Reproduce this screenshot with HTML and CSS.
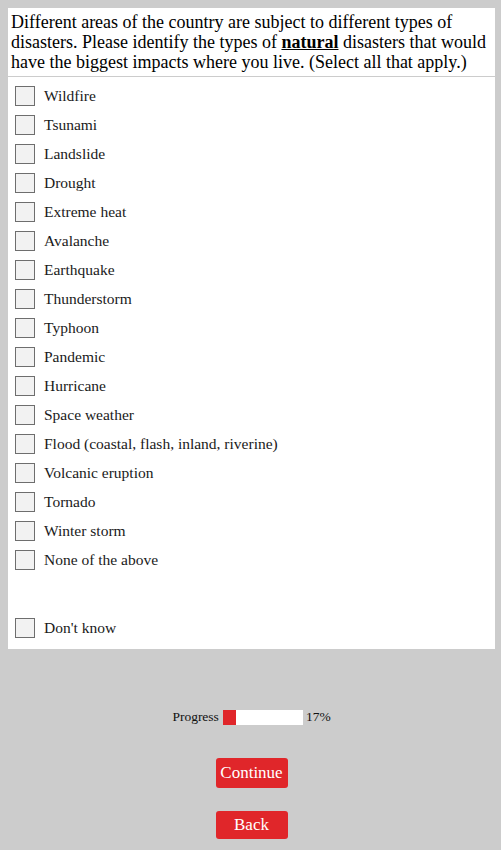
FILE: index.html
```html
<!DOCTYPE html>
<html>
<head>
<meta charset="utf-8">
<link rel="stylesheet" href="styles.css">
</head>
<body>
<div class="panel">
  <div class="question">Different areas of the country are subject to different types of disasters. Please identify the types of <b><u>natural</u></b> disasters that would have the biggest impacts where you live. (Select all that apply.)</div>
  <div class="options">
    <label class="row"><span class="box"></span><span class="lbl">Wildfire</span></label>
    <label class="row"><span class="box"></span><span class="lbl">Tsunami</span></label>
    <label class="row"><span class="box"></span><span class="lbl">Landslide</span></label>
    <label class="row"><span class="box"></span><span class="lbl">Drought</span></label>
    <label class="row"><span class="box"></span><span class="lbl">Extreme heat</span></label>
    <label class="row"><span class="box"></span><span class="lbl">Avalanche</span></label>
    <label class="row"><span class="box"></span><span class="lbl">Earthquake</span></label>
    <label class="row"><span class="box"></span><span class="lbl">Thunderstorm</span></label>
    <label class="row"><span class="box"></span><span class="lbl">Typhoon</span></label>
    <label class="row"><span class="box"></span><span class="lbl">Pandemic</span></label>
    <label class="row"><span class="box"></span><span class="lbl">Hurricane</span></label>
    <label class="row"><span class="box"></span><span class="lbl">Space weather</span></label>
    <label class="row"><span class="box"></span><span class="lbl">Flood (coastal, flash, inland, riverine)</span></label>
    <label class="row"><span class="box"></span><span class="lbl">Volcanic eruption</span></label>
    <label class="row"><span class="box"></span><span class="lbl">Tornado</span></label>
    <label class="row"><span class="box"></span><span class="lbl">Winter storm</span></label>
    <label class="row"><span class="box"></span><span class="lbl">None of the above</span></label>
    <label class="row dk"><span class="box"></span><span class="lbl">Don't know</span></label>
  </div>
</div>
<div class="footer">
  <div class="progress">
    <span class="ptext">Progress</span>
    <span class="bar"><span class="fill" style="width:17%"></span></span>
    <span class="pct">17%</span>
  </div>
  <button class="btn cont">Continue</button>
  <button class="btn back">Back</button>
</div>
</body>
</html>
```
FILE: styles.css
```css
html, body { margin: 0; padding: 0; }
body {
  background: #cccccc;
  padding: 8px 6px 0 8px;
  font-family: "Liberation Serif", "DejaVu Serif", serif;
  color: #111;
}
.panel {
  background: #fff;
  padding-bottom: 7px;
}
.question {
  font-size: 18px;
  line-height: 20px;
  padding: 4px 3px;
  border-bottom: 1px solid #cccccc;
  color: #000;
}
.options {
  padding-top: 4px;
  display: flex;
  flex-direction: column;
}
.row {
  height: 29px;
  display: flex;
  align-items: center;
  padding-left: 7px;
}
.row.dk { margin-top: 39px; }
.box {
  width: 18px;
  height: 18px;
  border: 1px solid #6e6e6e;
  background: #f2f2f2;
  flex: none;
}
.lbl {
  margin-left: 9px;
  font-size: 15.5px;
  color: #1a1a1a;
}
.footer {
  display: flex;
  flex-direction: column;
  align-items: center;
  padding-top: 60px;
}
.progress {
  display: flex;
  align-items: center;
  font-size: 13.5px;
  height: 16px;
}
.bar {
  width: 80px;
  height: 15px;
  background: #fff;
  margin: 0 3px 0 4px;
  display: flex;
}
.fill { background: #e0262a; height: 100%; }
.btn {
  background: #e0262a;
  color: #fff;
  border: none;
  border-radius: 3px;
  font-family: "Liberation Serif", "DejaVu Serif", serif;
  font-size: 17px;
  width: 72px;
  padding: 0;
}
.cont { height: 30px; margin-top: 33px; }
.back { height: 28px; margin-top: 23px; }
```
